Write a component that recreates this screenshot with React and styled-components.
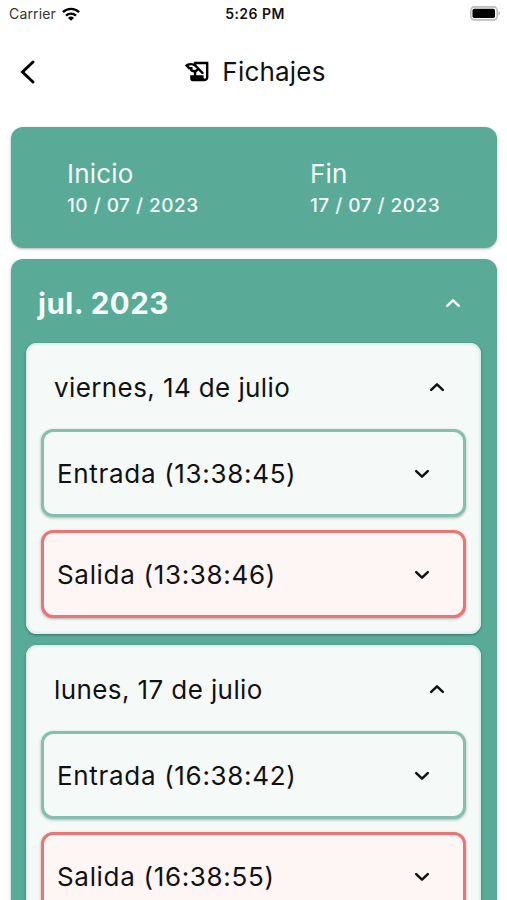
import { useState } from 'react';
import styled, { createGlobalStyle } from 'styled-components';
import { MdOutlineHistoryEdu } from 'react-icons/md';

const GlobalStyle = createGlobalStyle`
  * {
    box-sizing: border-box;
  }
  body {
    margin: 0;
    background: #fff;
    font-family: Inter, 'Liberation Sans', sans-serif;
    color: #111;
  }
  button {
    border: 0;
    padding: 0;
    background: none;
    color: inherit;
    font: inherit;
    letter-spacing: inherit;
    text-align: left;
  }
`;

const Screen = styled.div`
  width: 507px;
  height: 900px;
  overflow: hidden;
  display: flex;
  flex-direction: column;
`;

const StatusBar = styled.div`
  display: grid;
  grid-template-columns: 1fr auto 1fr;
  align-items: center;
  flex: none;
  height: 27px;
  padding: 0 6px 0 9px;
  font-size: 14px;
`;

const Carrier = styled.div`
  display: flex;
  align-items: center;
  gap: 6px;
  color: #333;
  letter-spacing: 0.15px;
`;

const Clock = styled.div`
  font-weight: 600;
  letter-spacing: 0.45px;
  color: #111;
`;

const BatteryIcon = styled.svg`
  justify-self: end;
`;

const Header = styled.header`
  display: grid;
  grid-template-columns: 40px 1fr 40px;
  align-items: center;
  flex: none;
  height: 90px;
  padding: 0 16px 0 17px;
`;

const BackButton = styled.button`
  display: flex;
`;

const Title = styled.h1`
  display: flex;
  align-items: center;
  justify-content: center;
  gap: 10px;
  margin: 0;
  padding: 0 0 2px 1px;
  font-size: 26px;
  font-weight: 400;
  letter-spacing: 0.2px;
`;

const Content = styled.main`
  display: flex;
  flex-direction: column;
  flex: none;
  gap: 11px;
  padding: 10px 10px 0 11px;
`;

const Card = styled.section`
  border-radius: 12px;
  background: #59aa97;
  box-shadow: 0 1px 3px rgba(0, 0, 0, 0.3);
  color: #f4fbf9;
`;

const RangeCard = styled(Card)`
  display: grid;
  grid-template-columns: 1fr 1fr;
  height: 121px;
  padding-top: 31px;
`;

const RangeField = styled.div`
  padding-left: 56px;
`;

const RangeLabel = styled.div`
  font-size: 26px;
  line-height: 32px;
  letter-spacing: 0.2px;
`;

const RangeDate = styled.div`
  font-size: 19px;
  font-weight: 500;
  line-height: 32px;
  letter-spacing: 0.48px;
`;

const MonthCard = styled(Card)`
  padding: 0 16px 16px 15px;
`;

const MonthHeader = styled.button`
  display: flex;
  align-items: center;
  justify-content: space-between;
  width: 100%;
  height: 84px;
  padding: 3px 20px 0 12px;
  font-size: 29.5px;
  font-weight: 700;
  letter-spacing: 0.5px;
`;

const DayList = styled.div`
  display: flex;
  flex-direction: column;
  gap: 11px;
`;

const DayCard = styled.div`
  padding: 0 15px 16px;
  border-radius: 11px;
  background: #f5faf9;
  box-shadow: 0 1px 3px rgba(0, 0, 0, 0.35), inset 0 0 2px 2px #dceeea;
  color: #111;
`;

const DayHeader = styled.button`
  display: flex;
  align-items: center;
  justify-content: space-between;
  width: 100%;
  height: 86px;
  padding: 2px 21px 0 13px;
  font-size: 26px;
  letter-spacing: 0.4px;
`;

const EntryList = styled.div`
  display: flex;
  flex-direction: column;
  gap: 13px;
`;

const Entry = styled.button`
  display: flex;
  align-items: center;
  justify-content: space-between;
  width: 100%;
  height: 88px;
  padding: 1px 33px 0 13px;
  border: 3px solid ${({ $out }) => ($out ? '#ea7476' : '#83c0af')};
  border-radius: 12px;
  background: ${({ $out }) => ($out ? '#fef5f5' : '#f5faf9')};
  box-shadow: 0 1px 3px rgba(0, 0, 0, 0.3);
  font-size: 26px;
  letter-spacing: 0.68px;
`;

const ChevronSvg = styled.svg`
  flex: none;
  transform: ${({ $open }) => ($open ? 'none' : 'rotate(180deg)')};
`;

const Chevron = ({ open }) => (
  <ChevronSvg $open={open} width="16" height="10" viewBox="0 0 16 10">
    <path
      d="M2.2 7.8L8 2.3l5.8 5.5"
      fill="none"
      stroke="currentColor"
      strokeWidth="2.5"
      strokeLinecap="round"
      strokeLinejoin="round"
    />
  </ChevronSvg>
);

const Wifi = () => (
  <svg width="18" height="14" viewBox="0 0 18 14">
    <g fill="none" stroke="#000" strokeWidth="2.4">
      <path d="M0.9 5.2a11.6 11.6 0 0 1 16.2 0" />
      <path d="M4 8.6a7.2 7.2 0 0 1 10 0" />
    </g>
    <path d="M9 13.8L6 10.9a4.3 4.3 0 0 1 6 0z" />
  </svg>
);

const Battery = () => (
  <BatteryIcon width="31" height="15" viewBox="0 0 31 15">
    <rect
      x="0.8"
      y="0.9"
      width="26.4"
      height="13"
      rx="3.6"
      fill="#fff"
      stroke="#bbb"
      strokeWidth="1.6"
    />
    <rect x="2.5" y="2.7" width="22.5" height="9.4" rx="1.8" />
    <path d="M28.5 5.2q2.6 2.2 0 4.4z" fill="#aaa" />
  </BatteryIcon>
);

const days = [
  {
    name: 'viernes, 14 de julio',
    entries: [
      { type: 'Entrada', time: '13:38:45' },
      { type: 'Salida', time: '13:38:46' },
    ],
  },
  {
    name: 'lunes, 17 de julio',
    entries: [
      { type: 'Entrada', time: '16:38:42' },
      { type: 'Salida', time: '16:38:55' },
    ],
  },
];

const Day = ({ day }) => {
  const [isOpen, setOpen] = useState(true);

  return (
    <DayCard>
      <DayHeader onClick={() => setOpen(!isOpen)}>
        {day.name}
        <Chevron open={isOpen} />
      </DayHeader>
      {isOpen && (
        <EntryList>
          {day.entries.map(({ type, time }) => (
            <Entry key={time} $out={type === 'Salida'}>
              {`${type} (${time})`}
              <Chevron />
            </Entry>
          ))}
        </EntryList>
      )}
    </DayCard>
  );
};

const App = () => {
  const [isMonthOpen, setMonthOpen] = useState(true);

  return (
    <Screen>
      <GlobalStyle />
      <StatusBar>
        <Carrier>
          Carrier
          <Wifi />
        </Carrier>
        <Clock>5:26 PM</Clock>
        <Battery />
      </StatusBar>
      <Header>
        <BackButton aria-label="Volver">
          <svg width="20" height="26" viewBox="0 0 20 26">
            <path
              d="M16 3L5.5 13 16 23"
              fill="none"
              stroke="#000"
              strokeWidth="3"
              strokeLinecap="round"
            />
          </svg>
        </BackButton>
        <Title>
          <MdOutlineHistoryEdu size={29} color="#000" />
          Fichajes
        </Title>
      </Header>
      <Content>
        <RangeCard>
          <RangeField>
            <RangeLabel>Inicio</RangeLabel>
            <RangeDate>10 / 07 / 2023</RangeDate>
          </RangeField>
          <RangeField>
            <RangeLabel>Fin</RangeLabel>
            <RangeDate>17 / 07 / 2023</RangeDate>
          </RangeField>
        </RangeCard>
        <MonthCard>
          <MonthHeader onClick={() => setMonthOpen(!isMonthOpen)}>
            jul. 2023
            <Chevron open={isMonthOpen} />
          </MonthHeader>
          {isMonthOpen && (
            <DayList>
              {days.map((day) => (
                <Day key={day.name} day={day} />
              ))}
            </DayList>
          )}
        </MonthCard>
      </Content>
    </Screen>
  );
};

export default App;
